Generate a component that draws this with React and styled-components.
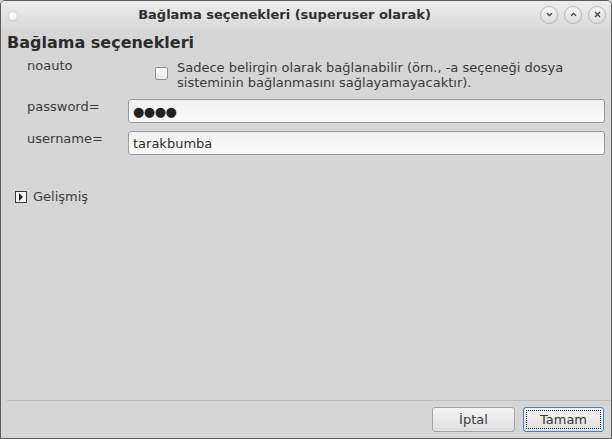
import React from "react";
import styled, { createGlobalStyle } from "styled-components";

const Global = createGlobalStyle`
  html, body { margin: 0; padding: 0; background: #d6d6d6; }
  * { box-sizing: border-box; }
  body { font-family: "DejaVu Sans", "Liberation Sans", sans-serif; }
`;

const Window = styled.div`
  width: 612px;
  height: 439px;
  display: flex;
  flex-direction: column;
  border: 1px solid #5c5c5c;
  border-radius: 5px 5px 0 0;
  background: #d6d6d6;
  overflow: hidden;
`;

const TitleBar = styled.div`
  height: 27px;
  flex: none;
  display: flex;
  align-items: center;
  padding: 0 5px 0 8px;
  background: linear-gradient(#ececec, #dadada);
`;

const Dot = styled.span`
  width: 8px;
  height: 8px;
  border-radius: 50%;
  background: #f7f7f7;
  box-shadow: 0 0 2px #a9a9a9;
  margin-top: 3px;
`;

const Title = styled.div`
  flex: 1;
  text-align: center;
  font-weight: bold;
  font-size: 13px;
  color: #2f2f2f;
  padding-left: 12px;
`;

const WinButtons = styled.div`
  display: flex;
  gap: 6px;
`;

const WinButton = styled.span`
  width: 18px;
  height: 18px;
  border-radius: 50%;
  border: 1px solid #b9b9b9;
  background: linear-gradient(#f4f4f4, #dedede);
  display: flex;
  align-items: center;
  justify-content: center;
`;

const Body = styled.div`
  flex: 1;
  display: flex;
  flex-direction: column;
  padding: 5px 0 0 6px;
`;

const Heading = styled.div`
  font-size: 16px;
  font-weight: bold;
  color: #2b2b2b;
  line-height: 20px;
`;

const Form = styled.div`
  display: grid;
  grid-template-columns: 101px 477px;
  row-gap: 8px;
  padding-left: 20px;
  margin-top: 2px;
`;

const Label = styled.div`
  font-size: 13px;
  color: #3a3a3a;
  line-height: 15px;
  padding-top: ${(p) => p.$top || 0}px;
`;

const CheckRow = styled.div`
  display: flex;
  align-items: flex-start;
  padding: 5px 0 1px 27px;
  gap: 9px;
`;

const Check = styled.span`
  width: 13px;
  height: 13px;
  margin-top: 7px;
  border: 1px solid #8f8f8f;
  border-radius: 2px;
  background: linear-gradient(#fdfdfd, #e6e6e6);
  flex: none;
`;

const CheckText = styled.div`
  font-size: 13px;
  line-height: 15px;
  color: #3a3a3a;
`;

const Input = styled.div`
  height: 24px;
  border: 1px solid #9a9a9a;
  border-radius: 3px;
  background: linear-gradient(#f0f0f0, #fbfbfb);
  display: flex;
  align-items: center;
  padding-left: 4px;
  font-size: 13px;
  color: #2e2e2e;
`;

const Dots = styled.span`
  font-size: 13px;
  letter-spacing: -0.5px;
  color: #222;
`;

const Expander = styled.div`
  display: flex;
  align-items: center;
  gap: 6px;
  margin: 34px 0 0 8px;
  font-size: 13px;
  color: #3a3a3a;
`;

const ArrowBox = styled.span`
  width: 12px;
  height: 12px;
  border: 1px solid #3a3a3a;
  background: #f5f5f5;
  display: flex;
  align-items: center;
  justify-content: center;
`;

const Spacer = styled.div`
  flex: 1;
`;

const Separator = styled.div`
  height: 1px;
  background: #bcbcbc;
`;

const Footer = styled.div`
  display: flex;
  justify-content: flex-end;
  gap: 8px;
  padding: 6px 7px 6px 0;
`;

const Button = styled.button`
  width: ${(p) => p.$w}px;
  height: 25px;
  font-family: inherit;
  font-size: 13px;
  color: #3a3a3a;
  border-radius: 3px;
  border: 1px solid ${(p) => (p.$focus ? "#4a7fc0" : "#a3a3a3")};
  background: linear-gradient(#f5f5f5, #dedede);
  padding: 2px;
  display: flex;
`;

const ButtonInner = styled.span`
  flex: 1;
  display: flex;
  align-items: center;
  justify-content: center;
  border: 1px dotted ${(p) => (p.$focus ? "#222" : "transparent")};
`;

export default function App() {
  return (
    <>
      <Global />
      <Window>
        <TitleBar>
          <Dot />
          <Title>Bağlama seçenekleri (superuser olarak)</Title>
          <WinButtons>
            <WinButton>
              <svg width="9" height="9" viewBox="0 0 9 9">
                <path d="M2 3.2 L4.5 5.7 L7 3.2" fill="none" stroke="#444" strokeWidth="1.3" />
              </svg>
            </WinButton>
            <WinButton>
              <svg width="9" height="9" viewBox="0 0 9 9">
                <path d="M2 5.8 L4.5 3.3 L7 5.8" fill="none" stroke="#444" strokeWidth="1.3" />
              </svg>
            </WinButton>
            <WinButton>
              <svg width="9" height="9" viewBox="0 0 9 9">
                <path d="M2 2 L7 7 M7 2 L2 7" fill="none" stroke="#444" strokeWidth="1.3" />
              </svg>
            </WinButton>
          </WinButtons>
        </TitleBar>
        <Body>
          <Heading>Bağlama seçenekleri</Heading>
          <Form>
            <Label $top={3}>noauto</Label>
            <CheckRow>
              <Check />
              <CheckText>
                Sadece belirgin olarak bağlanabilir (örn., -a seçeneği dosya
                <br />
                sisteminin bağlanmasını sağlayamayacaktır).
              </CheckText>
            </CheckRow>
            <Label $top={0}>password=</Label>
            <Input>
              <Dots>●●●●</Dots>
            </Input>
            <Label $top={0}>username=</Label>
            <Input>tarakbumba</Input>
          </Form>
          <Expander>
            <ArrowBox>
              <svg width="6" height="8" viewBox="0 0 6 8">
                <path d="M1 0 L5 4 L1 8 Z" fill="#222" />
              </svg>
            </ArrowBox>
            Gelişmiş
          </Expander>
          <Spacer />
          <Separator />
          <Footer>
            <Button $w={83}>
              <ButtonInner>İptal</ButtonInner>
            </Button>
            <Button $w={81} $focus>
              <ButtonInner $focus>Tamam</ButtonInner>
            </Button>
          </Footer>
        </Body>
      </Window>
    </>
  );
}
